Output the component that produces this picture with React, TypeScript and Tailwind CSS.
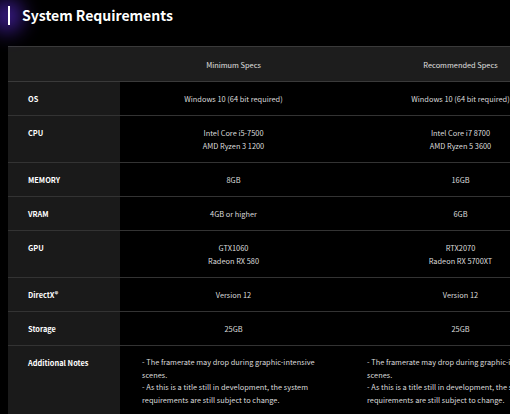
import React from 'react'

const rows = [
  { label: 'OS', min: ['Windows 10 (64 bit required)'], rec: ['Windows 10 (64 bit required)'] },
  { label: 'CPU', min: ['Intel Core i5-7500', 'AMD Ryzen 3 1200'], rec: ['Intel Core i7 8700', 'AMD Ryzen 5 3600'] },
  { label: 'MEMORY', min: ['8GB'], rec: ['16GB'] },
  { label: 'VRAM', min: ['4GB or higher'], rec: ['6GB'] },
  { label: 'GPU', min: ['GTX1060', 'Radeon RX 580'], rec: ['RTX2070', 'Radeon RX 5700XT'] },
  { label: 'DirectX®', min: ['Version 12'], rec: ['Version 12'] },
  { label: 'Storage', min: ['25GB'], rec: ['25GB'] },
]

const notes = [
  '- The framerate may drop during graphic-intensive scenes.',
  '- As this is a title still in development, the system requirements are still subject to change.',
]

const App = () => {
  return (
    <div className="w-[510px] h-[414px] overflow-hidden bg-black text-white font-['Noto_Sans_CJK_JP','Noto_Sans',sans-serif]">
      {/* heading */}
      <div className="relative flex items-center h-[30px] pl-[8px]">
        <div className="absolute left-[-8px] top-[0px] w-[30px] h-[32px] rounded-full bg-[#5b2bd6] opacity-70 blur-[10px]" />
        <div className="relative w-[2px] h-[19px] bg-white mr-[12px]" />
        <h2 className="relative text-[14px] font-bold leading-none">System Requirements</h2>
      </div>

      <div className="ml-[8px] mt-[16px] w-[566px] text-[7.4px] leading-[13px]">
        {/* header */}
        <div className="flex bg-[#1d1d1d] border-t border-b border-[#3a3a3a] h-[36px] items-center text-[#e0e0e0]">
          <div className="w-[112px]" />
          <div className="w-[227px] text-center">Minimum Specs</div>
          <div className="w-[227px] text-center">Recommended Specs</div>
        </div>

        {rows.map((r) => (
          <div key={r.label} className="flex border-b border-[#333]">
            <div className="w-[112px] bg-[#1a1a1a] px-[20px] py-[10px] font-bold text-white">{r.label}</div>
            <div className="w-[227px] py-[10px] text-center text-[#dcdcdc]">
              {r.min.map((t) => (
                <div key={t}>{t}</div>
              ))}
            </div>
            <div className="w-[227px] py-[10px] text-center text-[#dcdcdc]">
              {r.rec.map((t) => (
                <div key={t}>{t}</div>
              ))}
            </div>
          </div>
        ))}

        <div className="flex">
          <div className="w-[112px] bg-[#1a1a1a] px-[20px] py-[10px] h-[80px] font-bold text-white">Additional Notes</div>
          <div className="w-[227px] py-[10px] px-[22px] text-[#dcdcdc] leading-[12.7px]">
            {notes.map((t) => (
              <div key={t}>{t}</div>
            ))}
          </div>
          <div className="w-[227px] py-[10px] px-[20px] text-[#dcdcdc] leading-[12.7px]">
            {notes.map((t) => (
              <div key={t}>{t}</div>
            ))}
          </div>
        </div>
      </div>
    </div>
  )
}

export default App
